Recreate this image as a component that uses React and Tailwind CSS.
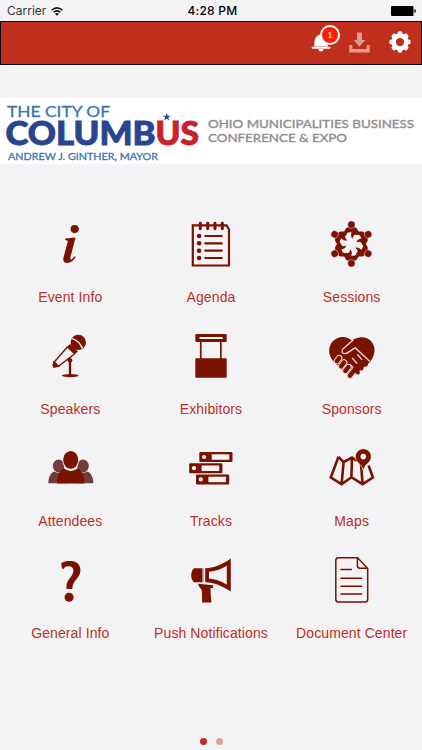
const DARK = "#7a1200";
const PAPER = "#f3f3f5";

function Icon({ children }) {
  return (
    <svg className="block w-12 h-12 overflow-visible" viewBox="0 0 48 48" fill={DARK}>
      {children}
    </svg>
  );
}

function InfoIcon() {
  return (
    <Icon>
      <circle cx="28.7" cy="9" r="4.1" />
      <path d="M19.4 18.6L29.6 17.4L24.4 37.2C23.9 39.3 24.4 40 25.3 39.6C26.4 39.1 27.5 37.9 28.6 36.3L29.7 37C27.6 40.6 24.8 43 21.3 43C17.9 43 16.7 40.8 17.5 37.5L21.6 22.3C22 20.6 21.4 20 19.1 19.9Z" />
    </Icon>
  );
}

function AgendaIcon() {
  return (
    <Icon>
      <path d="M5.8 5.3H39.5L42 9.5V45.5H5.8Z" fill="none" stroke={DARK} strokeWidth="2.2" />
      {[13.3, 20.7, 28, 35.3].map((x) => (
        <rect key={x} x={x - 1.5} y="1.7" width="3" height="8.5" rx="1.4" />
      ))}
      {[16, 23.3, 30.7, 38].map((y) => (
        <g key={y}>
          <circle cx="12.1" cy={y} r="2.3" />
          <rect x="17.2" y={y - 1.1} width="18.6" height="2.2" rx="1" />
        </g>
      ))}
    </Icon>
  );
}

function SessionsIcon() {
  return (
    <Icon>
      <g transform="translate(23.4 24)">
        {[0, 60, 120, 180, 240, 300].map((a) => (
          <g key={a} transform={`rotate(${a})`}>
            <path d="M-8.6 -10.6C-6.4 -12.6 -6 -17 -3 -16.8Q0 -14.6 3 -16.8C6 -17 6.4 -12.6 8.6 -10.6L5.6 -8.8C3.6 -10 1.6 -8.6 1.2 -5.2C-.6 -6.8 -.8 -9.4 .2 -11.4C-2 -12.2 -4.4 -11.6 -6 -9.2Z" />
            <circle cy="-19.3" r="3.7" stroke={PAPER} strokeWidth=".4" />
          </g>
        ))}
      </g>
    </Icon>
  );
}

function SpeakersIcon() {
  return (
    <Icon>
      <circle cx="32.3" cy="10.4" r="7.7" />
      <path d="M26.2 6.6Q33 8.6 36.4 16.4" fill="none" stroke={PAPER} strokeWidth="1.4" />
      <path d="M24 12L32 19.6L28.4 22.4L20.8 15.2Z" />
      <path d="M21.6 14.8L8 30.2L12.4 34.4L28.4 22" fill="none" stroke={DARK} strokeWidth="1.4" />
      <path d="M7.8 28.8L13.6 34.4L10 35.4L7.2 36L6.4 33Z" />
      <circle cx="24" cy="28.2" r="2.3" />
      <path d="M22.8 28H25.2V42.2H22.8Z" />
      <ellipse cx="24.2" cy="43.6" rx="8.4" ry="1.6" />
    </Icon>
  );
}

function ExhibitorsIcon() {
  return (
    <Icon>
      <rect x="8.3" y="2" width="31.4" height="8" rx="1.2" />
      <rect x="12.5" y="5" width="23" height="2" fill={PAPER} />
      <rect x="12.9" y="9" width="1.7" height="18" />
      <rect x="33" y="9" width="1.7" height="18" />
      <rect x="8.3" y="26.3" width="31.4" height="19.4" rx="1.2" />
    </Icon>
  );
}

function SponsorsIcon() {
  return (
    <Icon>
      <path d="M23.6 8.6C20 4.8 14 4 8.8 6.5C2.6 9.4 0 16 1.7 22.4C2.5 25.3 4.2 28 6.4 30.6L19.8 42.6L24.5 44.5L41.2 31C45 26.5 47 21.5 46.5 17C45.5 8.6 38.4 4.2 31.5 5.5C28.2 6 25.4 7.1 23.6 8.6Z" />
      <path d="M4.8 31.2L20 44L14 48H2Z" fill={PAPER} />
      {[
        [10, 27.6, 2.6],
        [14.6, 32.4, 3.2],
        [18.9, 37, 3.2],
        [23.6, 41.6, 3.4],
      ].map(([x, y, h]) => (
        <rect
          key={x}
          x={x - 2.7}
          y={y - h - 2}
          width="5.4"
          height={h * 2 + 4}
          rx="2.7"
          transform={`rotate(38 ${x} ${y})`}
          stroke="#f3d9d4"
          strokeWidth="1"
        />
      ))}
      <g fill="none" stroke="#f3d9d4" strokeWidth="1.3" strokeLinecap="round">
        <path d="M25.2 8L15.4 16.4C12.7 19 14 21.8 17.2 21.7C19.4 21.6 22.5 18.5 27.3 15.9L41.4 29" />
        <path d="M29.8 22.8L37 31.4" />
        <path d="M24.4 26.2L32.6 35.4" />
        <path d="M22.2 32.6L28.8 39" />
      </g>
      <path d="M41.8 30.5L27 43.8L31 47H45Z" fill={PAPER} />
      <path d="M28 38.5L31.6 42M32 34.5L35.2 38M36.4 30.8L39.6 34" stroke={DARK} strokeWidth="3.8" strokeLinecap="round" transform="translate(-1.6 -1.4)" />
    </Icon>
  );
}

function AttendeesIcon() {
  return (
    <Icon>
      <g fill="#713c3a">
        <ellipse cx="12.6" cy="22" rx="5.8" ry="6.4" />
        <ellipse cx="37" cy="22" rx="5.8" ry="6.4" />
        <path d="M2.3 39.3C2.5 33.5 4.2 29.6 8 27.6Q12.8 30 17 27.8L20 39.3ZM47.4 39.3C47.2 33.5 45.4 29.6 41.6 27.6Q37 30 32.6 27.8L30 39.3Z" />
      </g>
      <path d="M11 39.4C11.2 32 13 27 17.8 24.2Q24.7 30 31.6 24.2C36.4 27 38.2 32 38.4 39.4Z" />
      <ellipse cx="24.7" cy="16.6" rx="8.2" ry="10" fill={PAPER} />
      <ellipse cx="24.7" cy="15.9" rx="7.5" ry="8.9" />
    </Icon>
  );
}

function TracksIcon() {
  return (
    <Icon>
      {[
        [12.3, 8],
        [2.2, 19.2],
        [9, 30.4],
      ].map(([x, y]) => (
        <g key={y} transform={`translate(${x} ${y})`}>
          <rect width="33.2" height="10.1" rx="1.2" />
          <circle cx="4.8" cy="5" r="2.1" fill={PAPER} />
          <rect x="12.4" y="2.3" width="17.6" height="5.5" fill={PAPER} />
        </g>
      ))}
    </Icon>
  );
}

function MapsIcon() {
  return (
    <Icon>
      <path
        d="M10.5 12.8L2.8 33.5L13.6 40.2L23.4 33.2L34.6 40.2L44.9 33.5L40.6 21.5M10.5 12.8L15.6 18.2L24 13.6L29 17M15.6 18.2L13.6 40.2M24 13.6L23.4 33.2M33 20L34.6 40.2"
        fill="none"
        stroke={DARK}
        strokeWidth="2.6"
      />
      <path
        d="M35.3 26.6C34 22.5 32.8 21 30.4 19A8 8 0 1 1 40.2 19C37.8 21 36.6 22.5 35.3 26.6Z"
        stroke={PAPER}
        strokeWidth=".6"
      />
      <circle cx="35.3" cy="12.6" r="2.8" fill={PAPER} />
    </Icon>
  );
}

function QuestionIcon() {
  return (
    <Icon>
      <path d="M15.9 12.4L15.2 7.1C18 5.4 21.6 4.8 25.2 5.1C31.4 5.6 34.5 9.2 34.4 14.5C34.2 22.5 26.3 24 26.3 33.1H20.6C19 24 27 21.3 27.4 15.3C27.6 11.8 25.6 10.2 22.2 10.2C20.4 10.2 18.6 10.8 17.4 13Z" />
      <circle cx="23.1" cy="41.2" r="4.5" />
    </Icon>
  );
}

function MegaphoneIcon() {
  return (
    <Icon>
      <path
        d="M18.2 12.2C27 12.2 35 8.6 43.8 2.6V35.6C35 29.8 27 26.4 18.2 26.2ZM22 15.8V22.6C28.5 23 34.4 25.4 39.8 28.8V9.8C34.4 13.2 28.5 15.4 22 15.8Z"
        fillRule="evenodd"
      />
      <path d="M7 12.2H15.5V26.3H7C5 24.5 4.2 22 4.2 19.2C4.2 16.5 5 14 7 12.2Z" />
      <path d="M16.2 12.2H17V26.3H16.2Z" opacity=".4" />
      <path d="M11 27.8L26.2 29.2L25.8 31.9H23.6V37L24.4 46.4H15.2L14.8 34L12.2 30.8Z" />
    </Icon>
  );
}

function DocumentIcon() {
  return (
    <Icon>
      <g fill="none" stroke={DARK} strokeWidth="1.5" strokeLinecap="round" strokeLinejoin="round">
        <path d="M10.4 1.8H29.6L39.7 12.5V43.2Q39.7 46 37 46H10.4Q7.8 46 7.8 43.2V4.5Q7.8 1.8 10.4 1.8Z" />
        <path d="M29.4 2V9.8Q29.4 12.3 32 12.3H39.4" />
        <path d="M13 13.6H23.4M13 22.2H33.7M13 30.2H33.7M13 38.1H33.7" />
      </g>
    </Icon>
  );
}

const items = [
  { label: "Event Info", Glyph: InfoIcon },
  { label: "Agenda", Glyph: AgendaIcon },
  { label: "Sessions", Glyph: SessionsIcon },
  { label: "Speakers", Glyph: SpeakersIcon },
  { label: "Exhibitors", Glyph: ExhibitorsIcon },
  { label: "Sponsors", Glyph: SponsorsIcon },
  { label: "Attendees", Glyph: AttendeesIcon },
  { label: "Tracks", Glyph: TracksIcon },
  { label: "Maps", Glyph: MapsIcon },
  { label: "General Info", Glyph: QuestionIcon },
  { label: "Push Notifications", Glyph: MegaphoneIcon },
  { label: "Document Center", Glyph: DocumentIcon },
];

function StatusBar() {
  return (
    <div className="grid grid-cols-3 items-center h-[21px] pl-[7px] pr-[6px] pt-px text-xs text-black font-['Inter',sans-serif]">
      <div className="flex items-center gap-[5px]">
        <span className="text-[#333]">Carrier</span>
        <svg className="w-3 h-[9px]" viewBox="0 0 12 9" fill="none" stroke="#111" strokeWidth="1.5">
          <path d="M.6 3.2Q6 -1.4 11.4 3.2M2.6 5.3Q6 2.4 9.4 5.3" />
          <path d="M6 8.8L4 6.8Q6 5.3 8 6.8Z" fill="#111" stroke="none" />
        </svg>
      </div>
      <span className="pl-[2px] text-center font-medium tracking-[0.25px] whitespace-nowrap">4:28 PM</span>
      <svg className="justify-self-end w-[25px] h-[10px]" viewBox="0 0 25 10">
        <rect width="22.5" height="10" rx="1" />
        <rect x="23.3" y="3.2" width="1.4" height="3.6" rx=".7" />
      </svg>
    </div>
  );
}

function Header() {
  return (
    <div className="flex items-center justify-end h-11 pr-[10px] pb-[2px] bg-[#c02e1c] border border-black">
      <div className="relative w-[30px] h-[30px]">
        <svg className="w-[30px] h-[30px]" viewBox="0 0 30 30" fill="#fff">
          <path d="M3.2 19.4C3.2 12 4.6 8 10 7.2C15.4 8 16.8 12 16.8 19.4Z" />
          <rect x=".6" y="19.8" width="18.8" height="1.9" rx=".8" />
          <path d="M7.4 22H12.6Q12.2 24.6 10 24.6T7.4 22Z" />
        </svg>
        <span className="absolute left-[9px] -top-[2px] w-5 h-5 rounded-full border-2 border-white bg-[#ff1c05] text-white text-[9px] leading-4 text-center">
          1
        </span>
      </div>
      <svg className="w-[21px] h-[21px] ml-[8px]" viewBox="0 0 21 21" fill="#e39a90">
        <path d="M8 .4H13V8H16.3L10.5 14.8L4.7 8H8Z" />
        <path d="M.2 13H3.4V17H17.6V13H20.8V20.6H.2Z" />
      </svg>
      <svg className="w-[22px] h-[22px] ml-[19px]" viewBox="-11 -11 22 22">
        {[0, 45, 90, 135, 180, 225, 270, 315].map((a) => (
          <path key={a} d="M-3.1 -6L-2 -10.3Q0 -11 2 -10.3L3.1 -6Z" fill="#fff" transform={`rotate(${a})`} />
        ))}
        <circle r="6.3" fill="none" stroke="#fff" strokeWidth="4.4" />
      </svg>
    </div>
  );
}

function Banner() {
  return (
    <svg className="block mt-[33px] w-full h-[66px] bg-white font-['Lato',sans-serif]" viewBox="0 98 422 66">
      <text x="7" y="117.3" fontSize="16" fill="#3b76b3" stroke="#3b76b3" strokeWidth=".3" textLength="103" lengthAdjust="spacingAndGlyphs">
        THE CITY OF
      </text>
      <g fontSize="32" fontWeight="900" strokeWidth=".9">
        <text x="5.5" y="145.4" fill="#27468f" stroke="#27468f" textLength="150" lengthAdjust="spacingAndGlyphs">
          COLUMB
        </text>
        <text x="155.5" y="145.4" fill="#c9202e" stroke="#c9202e" textLength="43.5" lengthAdjust="spacingAndGlyphs">
          US
        </text>
      </g>
      <path d="M166.7 112.8L167.7 115.8H170.7L168.3 117.6L169.2 120.6L166.7 118.8L164.2 120.6L165.1 117.6L162.7 115.8H165.7Z" fill="#27468f" />
      <text x="8" y="160" fontSize="10" fill="#3b76b3" stroke="#3b76b3" strokeWidth=".3" textLength="150" lengthAdjust="spacingAndGlyphs">
        ANDREW J. GINTHER, MAYOR
      </text>
      <g fontSize="12.3" fill="#8f8f8f" stroke="#8f8f8f" strokeWidth=".4">
        <text x="208" y="128" textLength="206" lengthAdjust="spacingAndGlyphs">
          OHIO MUNICIPALITIES BUSINESS
        </text>
        <text x="208" y="142" textLength="139" lengthAdjust="spacingAndGlyphs">
          CONFERENCE &amp; EXPO
        </text>
      </g>
    </svg>
  );
}

function MenuItem({ label, Glyph }) {
  return (
    <div className="flex flex-col items-center h-28">
      <Glyph />
      <span className="mt-[19px] text-sm leading-5 text-[#bc3024] tracking-[0.1px] whitespace-nowrap">{label}</span>
    </div>
  );
}

export default function App() {
  return (
    <div className="flex flex-col w-full h-[750px] overflow-hidden bg-[#f3f3f5] font-['Liberation_Sans',Arial,sans-serif]">
      <StatusBar />
      <Header />
      <Banner />
      <div className="grid grid-cols-3 mt-14">
        {items.map((item) => (
          <MenuItem key={item.label} {...item} />
        ))}
      </div>
      <div className="flex justify-center gap-[9px] mt-auto pb-[5px]">
        <span className="w-[7px] h-[7px] rounded-full bg-[#c02e1c]" />
        <span className="w-[7px] h-[7px] rounded-full bg-[#e0a09a]" />
      </div>
    </div>
  );
}
